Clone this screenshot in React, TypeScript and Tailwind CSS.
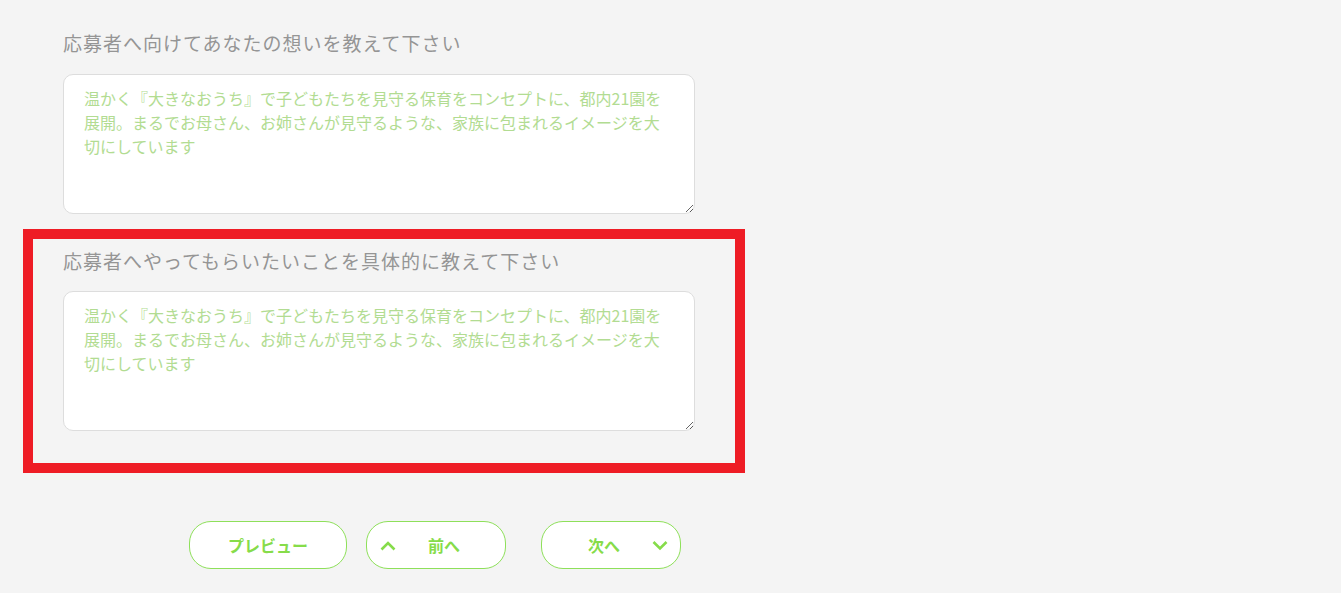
import React from "react";

const PH =
  "温かく『大きなおうち』で子どもたちを見守る保育をコンセプトに、都内21園を展開。まるでお母さん、お姉さんが見守るような、家族に包まれるイメージを大切にしています";

const font = { fontFamily: '"Noto Sans CJK JP", "Noto Sans", sans-serif' };

function Field({ label, gap }: { label: string; gap: string }) {
  return (
    <div>
      <div className="text-[19px] leading-[30px] tracking-[1px] text-[#959595] whitespace-nowrap">{label}</div>
      <textarea
        placeholder={PH}
        className={`${gap} block w-[632px] h-[140px] rounded-[10px] border border-[#dddddd] bg-white pl-[20px] pr-[24px] pt-[11px] text-[16px] leading-[24px] text-[#555] placeholder:text-[#b2dc92] outline-none`}
        style={font}
      />
    </div>
  );
}

export default function App() {
  return (
    <div className="min-h-screen w-full bg-[#f4f4f4] pt-[28px]" style={font}>
      <div className="ml-[23px] w-[722px]">
        <div className="pl-[40px]">
          <Field label="応募者へ向けてあなたの想いを教えて下さい" gap="mt-[16px]" />
        </div>
        <div className="mt-[15px] border-[10px] border-[#ee1c25] pl-[30px] pt-[7px] pb-[32px]">
          <Field label="応募者へやってもらいたいことを具体的に教えて下さい" gap="mt-[15px]" />
        </div>
      </div>
      <div className="mt-[48px] flex items-center">
        <button className="ml-[189px] flex h-[48px] w-[158px] items-center justify-center rounded-[22px] border border-[#8ee05a] bg-white text-[16px] font-bold text-[#86dc4a]">
          プレビュー
        </button>
        <button className="relative ml-[19px] flex h-[48px] w-[140px] items-center justify-center rounded-[22px] border border-[#8ee05a] bg-white text-[16px] font-bold text-[#86dc4a]">
          <svg className="absolute left-[12px] top-[17px]" width="18" height="13" viewBox="0 0 18 13" fill="none">
            <path d="M2.5 10.5 L9 4 L15.5 10.5" stroke="#86dc4a" strokeWidth="2.6" />
          </svg>
          <span className="ml-[16px]">前へ</span>
        </button>
        <button className="relative ml-[35px] flex h-[48px] w-[140px] items-center justify-center rounded-[22px] border border-[#8ee05a] bg-white text-[16px] font-bold text-[#86dc4a]">
          <span className="mr-[14px]">次へ</span>
          <svg className="absolute right-[11px] top-[17px]" width="18" height="13" viewBox="0 0 18 13" fill="none">
            <path d="M2.5 3 L9 9.5 L15.5 3" stroke="#86dc4a" strokeWidth="2.6" />
          </svg>
        </button>
      </div>
    </div>
  );
}
